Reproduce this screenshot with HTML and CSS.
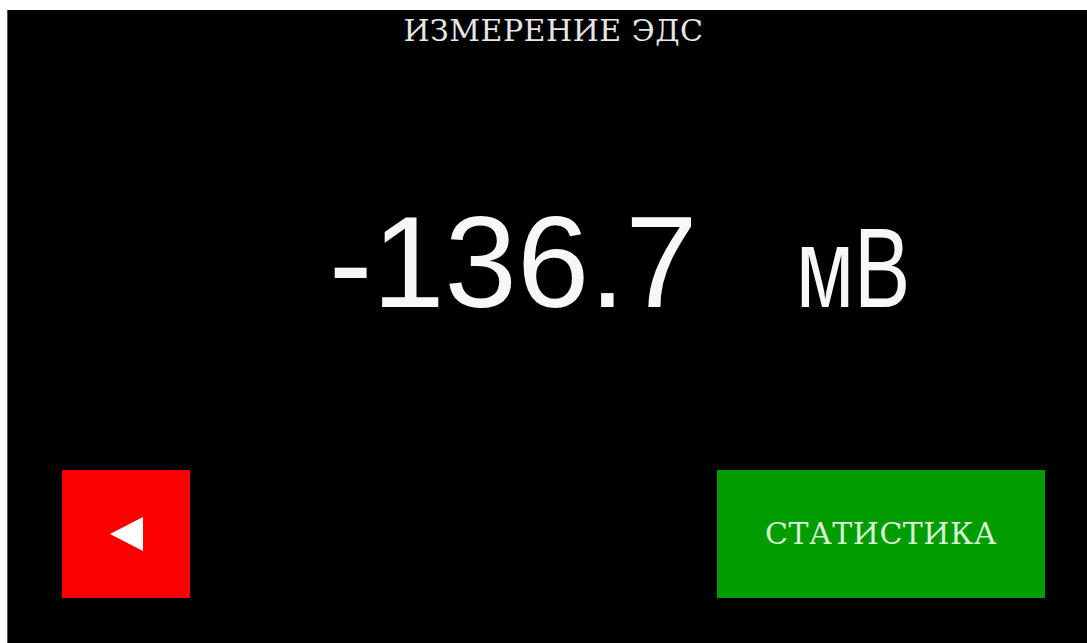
FILE: index.html
```html
<!DOCTYPE html>
<html lang="ru">
<head>
<meta charset="utf-8">
<title>Измерение ЭДС</title>
<link rel="stylesheet" href="styles.css">
</head>
<body>
  <main class="screen">
    <header class="screen-title">ИЗМЕРЕНИЕ ЭДС</header>

    <section class="reading">
      <span class="reading-value">-136.7</span>
      <span class="reading-unit">мВ</span>
    </section>

    <footer class="controls">
      <button class="btn btn-back" type="button" aria-label="Назад">
        <svg class="back-icon" width="33" height="34" viewBox="0 0 33 34">
          <polygon points="0,17 33,0 33,34" fill="#ffffff"/>
        </svg>
      </button>
      <button class="btn btn-stats" type="button">СТАТИСТИКА</button>
    </footer>
  </main>
</body>
</html>
```

FILE: styles.css
```css
html, body {
  margin: 0;
  padding: 0;
  background: #ffffff;
}

body {
  padding: 10px 0 0 7px;
  height: 643px;
  box-sizing: border-box;
  overflow: hidden;
}

.screen {
  width: 1079px;
  height: 633px;
  background: #000000;
  border-left: 1px solid #555555;
  display: flex;
  flex-direction: column;
  box-sizing: content-box;
}

/* slab-serif caption face, used for the title and the button label */
.screen-title,
.btn-stats {
  font-family: "DejaVu Serif", "Liberation Serif", serif;
  font-size: 30px;
  line-height: 40px;
  letter-spacing: 0.5px;
}

.screen-title {
  color: #e6e6e6;
  text-align: center;
  padding: 1px 0 0 12px;
}

.reading {
  display: flex;
  align-items: baseline;
  margin-top: 146px;
  padding-left: 321px;
  font-family: "Liberation Sans", Arial, sans-serif;
  color: #f7f7f7;
}

.reading-value {
  font-size: 130px;
  line-height: 130px;
}

.reading-unit {
  display: inline-block;
  font-size: 114px;
  line-height: 114px;
  margin-left: 98px;
  transform: scaleX(0.74);
  transform-origin: left bottom;
}

.controls {
  margin-top: auto;
  display: flex;
  justify-content: space-between;
  padding: 0 42px 45px 54px;
}

.btn {
  border: 0;
  margin: 0;
  padding: 0;
  height: 128px;
  display: flex;
  align-items: center;
  justify-content: center;
  cursor: pointer;
}

.btn-back {
  width: 128px;
  background: #fa0000;
}

.back-icon {
  display: block;
  margin-left: 1px;
}

.btn-stats {
  width: 328px;
  background: #009c00;
  color: #d9f3d2;
}
```
